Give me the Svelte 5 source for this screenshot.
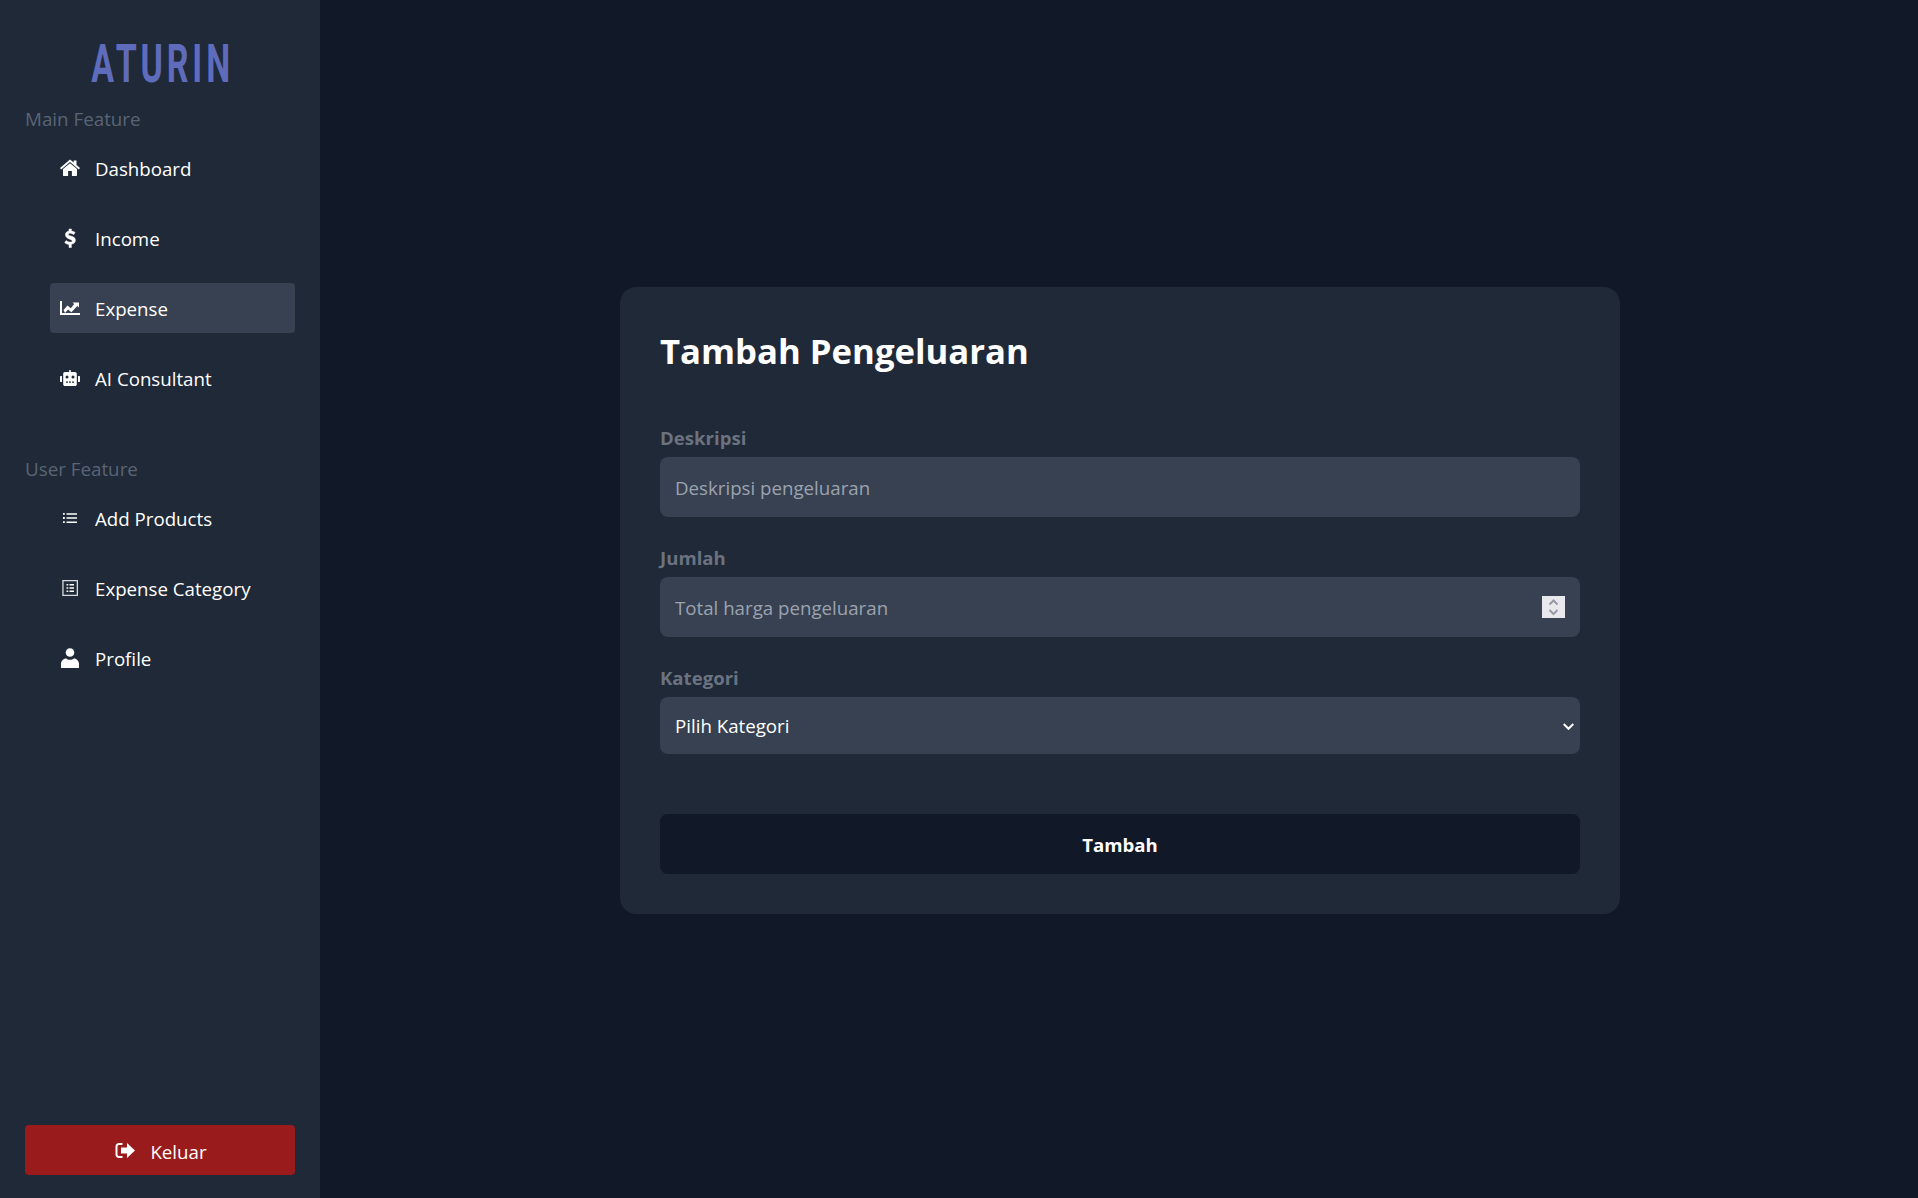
<script>
	const mainNav = [
		{ label: 'Dashboard', icon: 'home' },
		{ label: 'Income', icon: 'dollar' },
		{ label: 'Expense', icon: 'chart', active: true },
		{ label: 'AI Consultant', icon: 'robot' }
	];
	const userNav = [
		{ label: 'Add Products', icon: 'list' },
		{ label: 'Expense Category', icon: 'listalt' },
		{ label: 'Profile', icon: 'user' }
	];
</script>

{#snippet icon(name)}
	<svg class="icon" viewBox="0 0 20 20" aria-hidden="true">
		{#if name === 'home'}
			<path d="M10 1.500 0 10l1.200 1.400L10 4l8.800 7.400L20 10l-3.500-3V2.500h-2.800v2.100z" />
			<path d="M10 5.200 3 11v6.200c0 .4.300.7.700.7h4.400v-5h3.800v5h4.400c.4 0 .7-.3.700-.7V11z" />
		{:else if name === 'dollar'}
			<path class="thick" d="M9 1h2.400v2c1.600.2 2.900.8 3.700 1.500l-1.300 2.100c-1-.7-2.300-1.300-3.600-1.300-1.200 0-1.900.4-1.900 1.100 0 .8.900 1.100 2.500 1.600 2.300.7 4.600 1.500 4.600 4.200 0 2.200-1.500 3.600-4 3.900V19.500H9v-3c-1.800-.2-3.300-.9-4.300-1.900l1.500-2.100c1.100.9 2.400 1.600 3.900 1.600 1.300 0 2.100-.4 2.100-1.200s-.9-1.200-2.600-1.700C7.400 10.100 5.400 9.200 5.400 6.700c0-2 1.400-3.200 3.600-3.600z" />
		{:else if name === 'chart'}
			<path d="M0 3h2V15h18v2H0z" />
			<path d="M3.500 12 7.500 7.500l3.300 2.700 3.400-4.200-1.700-1.600H19v5.200l-1.700-1.600-5.900 6.200-3.300-2.700-3 3.500z" />
		{:else if name === 'robot'}
			<path d="M9.200 2h1.600v2H15c1 0 1.800.8 1.800 1.800V16.200c0 1-.8 1.800-1.800 1.800H5c-1 0-1.800-.8-1.800-1.800V5.800C3.200 4.800 4 4 5 4h4.200z M2 8v6H1c-.6 0-1-.4-1-1V9c0-.6.400-1 1-1z M18 8h1c.6 0 1 .4 1 1v4c0 .6-.4 1-1 1h-1z" />
			<g class="cut">
				<circle cx="7" cy="9" r="1.500" />
				<circle cx="13" cy="9" r="1.500" />
				<rect x="6" y="13.500" width="2" height="1.200" />
				<rect x="9" y="13.500" width="2" height="1.200" />
				<rect x="12" y="13.500" width="2" height="1.200" />
			</g>
		{:else if name === 'list'}
			<path d="M3 5h1.800v1.800H3z M6.500 5.200h10.500v1.500H6.500z M3 9.100h1.800v1.800H3z M6.500 9.300h10.500v1.500H6.500z M3 13.200h1.800v1.800H3z M6.500 13.400h10.500v1.500H6.500z" />
		{:else if name === 'listalt'}
			<path fill-rule="evenodd" d="M2.300 2h15.700v16H2.300z M3.600 3.300v13.400h13.100V3.300z" fill="#d8dade" />
			<path d="M6.500 6h1.800v1.500H6.500z M9.500 6h4.500v1.500H9.500z M6.500 9.200h1.800v1.500H6.500z M9.500 9.200h4.500v1.500H9.500z M6.500 12.400h1.800v1.500H6.500z M9.500 12.400h4.500v1.500H9.500z" />
		{:else if name === 'user'}
			<circle cx="10" cy="4.500" r="4.300" />
			<path d="M1 20v-4c0-3 2.300-5.500 5.100-5.500 1 .8 2.500 1.300 3.900 1.300s2.900-.5 3.900-1.300c2.800 0 5.100 2.500 5.100 5.500v4z" />
		{:else if name === 'signout'}
			<path d="M7.500 3H4C2 3 .5 4.500.5 6.500v8c0 2 1.500 3.500 3.500 3.500h3.500v-2H4c-.8 0-1.500-.7-1.500-1.500v-8C2.500 5.700 3.200 5 4 5h3.500z" />
			<path d="M12 3v4.500H6v6h6V18l8-7.500z" />
		{/if}
	</svg>
{/snippet}

{#snippet navList(items)}
	<ul class="nav">
		{#each items as item}
			<li class:active={item.active}>
				{@render icon(item.icon)}
				<span>{item.label}</span>
			</li>
		{/each}
	</ul>
{/snippet}

<div class="page">
	<aside class="sidebar">
		<div class="logo"><span>ATURIN</span></div>
		<p class="section first">Main Feature</p>
		{@render navList(mainNav)}
		<p class="section">User Feature</p>
		{@render navList(userNav)}
		<button class="logout">
			{@render icon('signout')}
			<span>Keluar</span>
		</button>
	</aside>

	<main class="content">
		<form class="card">
			<h1>Tambah Pengeluaran</h1>
			<label class="field">
				<span>Deskripsi</span>
				<input type="text" placeholder="Deskripsi pengeluaran" />
			</label>
			<label class="field">
				<span>Jumlah</span>
				<div class="number-wrap">
					<input type="text" placeholder="Total harga pengeluaran" />
					<div class="spinner">
						<svg viewBox="0 0 23 22" width="23" height="22">
							<path d="M7.500 8.500 11.500 4.500l4 4M7.500 14l4 4 4-4" />
						</svg>
					</div>
				</div>
			</label>
			<label class="field last">
				<span>Kategori</span>
				<div class="select-wrap">
					<select>
						<option>Pilih Kategori</option>
					</select>
					<svg class="chevron" viewBox="0 0 11 7" width="11" height="7">
						<path d="M.7 1 5.500 5.800 10.300 1" />
					</svg>
				</div>
			</label>
			<button type="button" class="submit">Tambah</button>
		</form>
	</main>
</div>

<style>
	:global(body) {
		margin: 0;
		background: #111827;
	}
	.page {
		display: flex;
		height: 1198px;
		font-family: 'Open Sans', 'Noto Sans', sans-serif;
		color: #fff;
	}
	.sidebar {
		width: 320px;
		box-sizing: border-box;
		background: #1f2937;
		padding: 0 25px 23px;
		display: flex;
		flex-direction: column;
	}
	.logo {
		height: 104px;
		display: flex;
		justify-content: center;
		align-items: center;
	}
	.logo span {
		font-family: 'Roboto', sans-serif;
		font-weight: 700;
		font-size: 53px;
		letter-spacing: 6px;
		color: #5f6bbb;
		transform: scaleX(0.64);
		line-height: 1;
		margin-top: 24px;
		margin-left: 6px;
	}
	.section {
		margin: 54px 0 0;
		font-size: 18.8px;
		line-height: 24px;
		color: #5a6475;
	}
	.section.first {
		margin-top: 3px;
	}
	.nav {
		list-style: none;
		margin: 12px 0 0 25px;
		padding: 0;
		display: flex;
		flex-direction: column;
		gap: 20px;
	}
	.nav li {
		height: 50px;
		box-sizing: border-box;
		padding-left: 10px;
		border-radius: 4px;
		display: flex;
		align-items: center;
		gap: 15px;
		font-size: 18.7px;
	}
	.nav li span {
		margin-top: 1px;
	}
	.nav li.active {
		background: #374151;
	}
	.icon {
		width: 20px;
		height: 20px;
		flex: none;
		fill: #fff;
	}
	.icon .cut {
		fill: #1f2937;
	}
	.icon .thick {
		stroke: #fff;
		stroke-width: 0.5;
	}
	.logout {
		margin-top: auto;
		height: 50px;
		border: 0;
		border-radius: 4px;
		padding: 0 0 0 2px;
		background: #991b1b;
		color: #fff;
		font: inherit;
		font-size: 18.7px;
		display: flex;
		align-items: center;
		justify-content: center;
		gap: 15px;
	}
	.logout span {
		margin-top: 2px;
	}
	.content {
		flex: 1;
		display: flex;
		justify-content: center;
		padding: 287px 0 0 2px;
		box-sizing: border-box;
		align-items: flex-start;
	}
	.card {
		width: 1000px;
		box-sizing: border-box;
		background: #1f2937;
		border-radius: 16px;
		padding: 40px;
		display: flex;
		flex-direction: column;
	}
	h1 {
		margin: 0 0 51px;
		font-size: 34.7px;
		line-height: 48px;
		font-weight: 700;
	}
	.field {
		display: flex;
		flex-direction: column;
		margin-bottom: 29px;
	}
	.field.last {
		margin-bottom: 60px;
	}
	.field > span {
		font-size: 18.6px;
		line-height: 24px;
		font-weight: 700;
		color: #6b7280;
		margin-bottom: 7px;
	}
	input,
	select {
		display: block;
		width: 100%;
		box-sizing: border-box;
		height: 60px;
		border: 0;
		outline: 0;
		border-radius: 8px;
		padding: 0 15px;
		background: #374151;
		color: #fff;
		font: inherit;
		font-size: 18.7px;
	}
	input::placeholder {
		color: #9ca3af;
		opacity: 1;
	}
	select {
		height: 57px;
		appearance: none;
	}
	.number-wrap,
	.select-wrap {
		position: relative;
	}
	.spinner {
		position: absolute;
		top: 19px;
		right: 15px;
		width: 23px;
		height: 22px;
		background: #e9e9ed;
	}
	.spinner svg path,
	.chevron path {
		fill: none;
		stroke-width: 2;
	}
	.spinner svg path {
		stroke: #9a98a8;
	}
	.spinner svg {
		display: block;
	}
	.chevron {
		position: absolute;
		top: 26px;
		right: 6px;
		pointer-events: none;
	}
	.chevron path {
		stroke: #fff;
	}
	.submit {
		height: 60px;
		border: 0;
		border-radius: 8px;
		background: #111827;
		color: #fff;
		font: inherit;
		font-size: 18.6px;
		font-weight: 700;
	}
</style>
